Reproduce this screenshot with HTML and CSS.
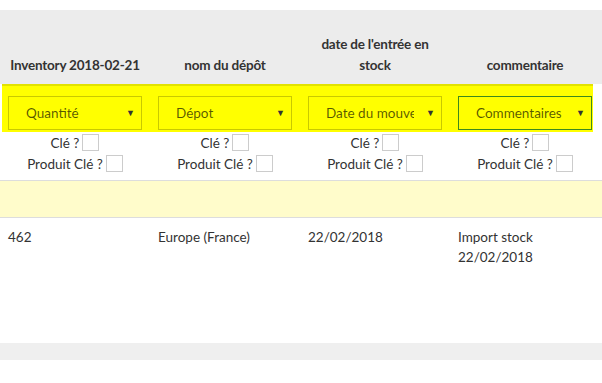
FILE: index.html
```html
<!DOCTYPE html>
<html>
    <head>
        <link rel="stylesheet" href="styles.css">
    </head>
    <body>
        <div id="grid-head" class="cols">
            <div class="th">Inventory 2018-02-21</div>
            <div class="th">nom du dépôt</div>
            <div class="th">date de l'entrée en stock</div>
            <div class="th">commentaire</div>
        </div>
        <div id="filter-band">
            <div class="cols">
                <div class="cell"><div class="pick"><span class="pick-text">Quantité</span><span class="pick-arrow">&#9660;</span></div></div>
                <div class="cell"><div class="pick"><span class="pick-text">Dépot</span><span class="pick-arrow">&#9660;</span></div></div>
                <div class="cell"><div class="pick"><span class="pick-text">Date du mouvement</span><span class="pick-arrow">&#9660;</span></div></div>
                <div class="cell"><div class="pick focused"><span class="pick-text">Commentaires</span><span class="pick-arrow">&#9660;</span></div></div>
            </div>
        </div>
        <div id="keys" class="cols">
            <div class="key-cell">
                <label class="key">Clé ? <span class="box"></span></label>
                <label class="key">Produit Clé ? <span class="box"></span></label>
            </div>
            <div class="key-cell">
                <label class="key">Clé ? <span class="box"></span></label>
                <label class="key">Produit Clé ? <span class="box"></span></label>
            </div>
            <div class="key-cell">
                <label class="key">Clé ? <span class="box"></span></label>
                <label class="key">Produit Clé ? <span class="box"></span></label>
            </div>
            <div class="key-cell">
                <label class="key">Clé ? <span class="box"></span></label>
                <label class="key">Produit Clé ? <span class="box"></span></label>
            </div>
        </div>
        <div id="new-row"></div>
        <div class="cols data-row">
            <div class="td">462</div>
            <div class="td">Europe (France)</div>
            <div class="td">22/02/2018</div>
            <div class="td">Import stock 22/02/2018</div>
        </div>
        <div id="footer-bar"></div>
    </body>
</html>
```

FILE: styles.css
```css
body {
    margin: 0;
    padding-top: 10px;
    background-color: white;
    color: #333333;
    font-family: "Lato", "Liberation Sans", sans-serif;
    font-size: 13.5px;
    line-height: 20px;
}

.cols {
    display: grid;
    grid-template-columns: repeat(4, 150px);
}

#grid-head {
    background-color: #ececec;
    height: 74px;
}

.th {
    display: flex;
    align-items: flex-end;
    justify-content: center;
    text-align: center;
    padding: 8px 6px;
    font-weight: bold;
    line-height: 21px;
    letter-spacing: -0.2px;
}

#filter-band {
    margin-left: 2px;
    width: 591px;
    background-color: #ffff00;
    border-top: 2px solid #e2e200;
    padding: 10px 0 2px;
}

#filter-band > .cols {
    margin-left: -2px;
}

.cell {
    padding: 0 8px;
}

.pick {
    display: flex;
    align-items: center;
    height: 34px;
    box-sizing: border-box;
    border: 1px solid #c9c900;
    padding: 0 6px 0 17px;
    color: rgba(0, 0, 0, 0.66);
}

.pick.focused {
    border-color: #3f8a1c;
}

.pick-text {
    flex: 1;
    overflow: hidden;
    white-space: nowrap;
    margin-right: 12px;
}

.pick-arrow {
    font-size: 9px;
    color: #333;
}

#keys {
    padding-bottom: 6px;
}

.key {
    display: flex;
    justify-content: center;
    align-items: center;
    gap: 3px;
    height: 21px;
}

.box {
    width: 15px;
    height: 15px;
    border: 1px solid #cccccc;
    background-color: white;
}

#new-row {
    height: 36px;
    background-color: #fffccb;
    border-top: 1px solid #dddddd;
    border-bottom: 1px solid #dddddd;
}

.data-row {
    height: 125px;
}

.td {
    padding: 9px 8px 8px;
}

#footer-bar {
    height: 17px;
    background-color: #efefef;
}
```
